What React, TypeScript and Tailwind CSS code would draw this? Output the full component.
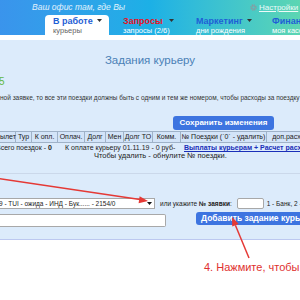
import React from "react";

const Caret = ({ className = "" }: { className?: string }) => (
  <svg width="5" height="3" viewBox="0 0 5 3" className={"inline-block align-top mt-[3px] " + className}>
    <path d="M0 0h5L2.5 3z" fill="#333" />
  </svg>
);

const cols = [
  { w: "w-[16px]", t: "ылет" },
  { w: "w-[16px]", t: "Тур" },
  { w: "w-[26px]", t: "К опл." },
  { w: "w-[27px]", t: "Оплач." },
  { w: "w-[21px]", t: "Долг" },
  { w: "w-[18px]", t: "Мен" },
  { w: "w-[29px]", t: "Долг ТО" },
  { w: "w-[28px]", t: "Комм." },
  { w: "w-[86px]", t: "№ Поездки (`0` - удалить)" },
  { w: "w-[40px]", t: "доп.расх" },
];

export default function App() {
  return (
    <div className="relative w-[300px] h-[300px] overflow-hidden bg-white font-['Liberation_Sans',Arial,sans-serif]">
      {/* header */}
      <header className="h-[35px] flex flex-col bg-gradient-to-r from-[#3a94ec] via-[#1cb0e6] to-[#5cd6b2]">
        <div className="h-[15px] flex items-center whitespace-nowrap">
          <span className="w-[250px] shrink-0 pl-[32px] text-[8.5px] italic text-white/85">Ваш офис там, где Вы</span>
          <span className="flex items-center gap-[2px] text-[8px] text-white/90">
            <svg width="7" height="7" viewBox="0 0 10 10" className="shrink-0">
              <circle cx="5" cy="5" r="3.6" fill="none" stroke="#8a9aa0" strokeWidth="2.2" strokeDasharray="1.6 1.2" />
              <circle cx="5" cy="5" r="2.2" fill="none" stroke="#8a9aa0" strokeWidth="1.4" />
            </svg>
            <span className="underline">Настройки</span>
          </span>
        </div>
        <nav className="h-[20px] flex items-end whitespace-nowrap">
          <div className="ml-[45px] w-[64px] shrink-0 h-[20px] bg-white rounded-t-[4px] pl-[8px] pt-[1px]">
            <div className="text-[9px] leading-[11px] font-bold text-[#1f5fd6]">
              В работе <Caret className="ml-[2px]" />
            </div>
            <div className="text-[7.5px] leading-[8px] text-[#666]">курьеры</div>
          </div>
          <div className="w-[73px] shrink-0 h-[20px] pl-[14px] pt-[1px]">
            <div className="text-[9px] leading-[11px] font-bold text-[#e8121f]">
              Запросы <Caret className="ml-[4px]" />
            </div>
            <div className="text-[7.5px] leading-[8px] text-white">запросы (2/6)</div>
          </div>
          <div className="w-[76px] shrink-0 h-[20px] pl-[14px] pt-[1px]">
            <div className="text-[9px] leading-[11px] font-bold text-[#1f5fd6]">
              Маркетинг <Caret className="ml-[2px]" />
            </div>
            <div className="text-[7.5px] leading-[8px] text-white">дни рождения</div>
          </div>
          <div className="shrink-0 h-[20px] pl-[14px] pt-[1px]">
            <div className="text-[9px] leading-[11px] font-bold text-[#1f5fd6]">Финансы</div>
            <div className="text-[7.5px] leading-[8px] text-white">моя касса</div>
          </div>
        </nav>
      </header>
      <div className="h-[5px] bg-white" />

      {/* content */}
      <main className="h-[200px] flex flex-col bg-[#dcebfb] border-b border-[#bcc8f0] whitespace-nowrap">
        <h1 className="pt-[14px] text-center text-[11.5px] leading-[12px] text-[#4a80b6]">Задания курьеру</h1>
        <div className="mt-[10px] -ml-[1px] text-[10px] leading-[12px] text-[#62b944]">5</div>
        <p className="mt-[6px] text-[6.5px] leading-[8px] text-[#333]">
          ной заявке, то все эти поездки должны быть с одним и тем же номером, чтобы расходы за поездку учитывались
        </p>
        <div className="mt-[6px] pl-[173px] h-[14px]">
          <button className="w-[101px] h-[14px] rounded-[3px] bg-[#3d74e0] text-white text-[8px] font-bold leading-[14px]">
            Сохранить изменения
          </button>
        </div>

        <div className="mt-[9px] flex h-[12px] border-y border-[#9fb2c8] bg-[#d3e4f8]">
          {cols.map((c) => (
            <div key={c.t} className={c.w + " shrink-0 border-r border-[#9fb2c8] text-center text-[7px] leading-[10px] text-[#222]"}>
              {c.t}
            </div>
          ))}
        </div>

        <div className="mt-[1px] flex text-[7px] leading-[8px] text-[#222]">
          <span className="-ml-[4px] w-[69px] shrink-0">Всего поездок - <b>0</b></span>
          <span className="w-[108px] shrink-0">К оплате курьеру 01.11.19 - 0 руб</span>
          <span className="w-[11px] shrink-0">-</span>
          <a className="font-bold underline text-[#1a2fb8]">Выплаты курьерам + Расчет расходов</a>
        </div>
        <div className="ml-[94px] text-[7.5px] leading-[8px] text-[#222]">Чтобы удалить - обнулите № поездки.</div>

        <div className="mt-[13px] h-px bg-[#cbd8ea]" />

        <div className="mt-[24px] flex items-center h-[11px] text-[6.5px] text-[#222]">
          <div className="w-[155px] shrink-0 h-[11px] flex items-center justify-between bg-white border border-[#a8a8a8] border-l-0 pr-[2px]">
            <span className="-ml-[1px] leading-[9px]">9 - TUI - ожида - ИНД - Бук...... - 2154/0</span>
            <svg width="5" height="3" viewBox="0 0 5 3"><path d="M0 0h5L2.5 3z" fill="#111" /></svg>
          </div>
          <span className="ml-[5px]">или укажите <b>№ заявки</b>:</span>
          <div className="ml-[5px] w-[27px] h-[11px] shrink-0 bg-white border border-[#a8a8a8] rounded-[2px]" />
          <span className="ml-[3px]">1 - Банк, 2 - Расход</span>
        </div>

        <div className="mt-[3px] flex items-start">
          <div className="mt-[2px] w-[166px] h-[13px] shrink-0 bg-white border border-[#a8a8a8] border-l-0 rounded-r-[2px]" />
          <button className="ml-[30px] h-[13px] pl-[5px] pr-[6px] rounded-[3px] bg-[#3d74e0] text-white text-[8.5px] font-bold leading-[13px] whitespace-nowrap">
            Добавить задание курьеру
          </button>
        </div>
      </main>

      <p className="mt-[21px] ml-[204px] text-[11px] leading-[13px] text-[#e0312f] whitespace-nowrap">
        4. Нажмите, чтобы добавить
      </p>

      {/* annotation arrows */}
      <svg className="absolute inset-0 pointer-events-none" width="300" height="300" viewBox="0 0 300 300">
        <line x1="-5" y1="178" x2="140" y2="199.6" stroke="#e53935" strokeWidth="1.5" />
        <polygon points="148,201 138.6,203.2 139.6,196.2" fill="#e53935" />
        <line x1="249" y1="258" x2="235.4" y2="225.3" stroke="#e53935" strokeWidth="1.5" />
        <polygon points="232,217 238.7,224 232.2,226.6" fill="#e53935" />
      </svg>
    </div>
  );
}
